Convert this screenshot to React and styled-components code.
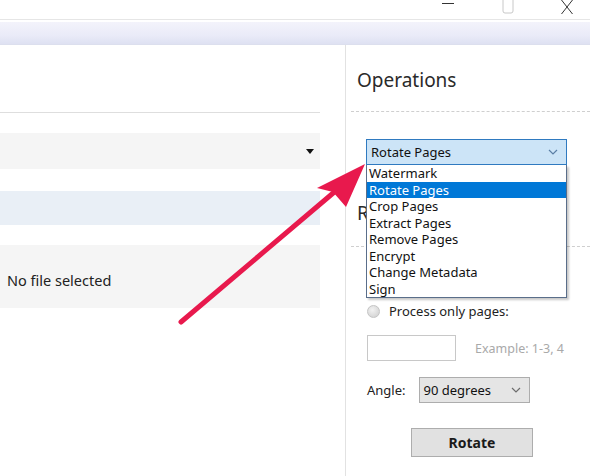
import React from 'react';
import styled, { createGlobalStyle } from 'styled-components';

const GlobalStyle = createGlobalStyle`
  html, body {
    margin: 0;
    padding: 0;
    background: #fff;
  }
  body {
    font-family: 'Noto Sans', 'Open Sans', sans-serif;
    color: #222;
  }
`;

const Window = styled.div`
  position: relative;
  width: 590px;
  height: 476px;
  overflow: hidden;
  background: #fff;
  display: flex;
  flex-direction: column;
`;

const TitleBar = styled.div`
  height: 20px;
  border-bottom: 1px solid #e6e6e6;
  display: flex;
  justify-content: flex-end;
  align-items: flex-start;
  padding-right: 17px;
  gap: 47px;
  box-sizing: border-box;
`;

const WinButton = styled.div`
  width: ${p => p.w || 12}px;
  height: 16px;
  display: flex;
  justify-content: center;
  align-items: flex-start;
  svg { display: block; }
`;

const Band = styled.div`
  height: 22px;
  margin-top: 2px;
  background: linear-gradient(180deg, #f3f3fb 0%, #eaebf8 60%, #dee1f2 100%);
  border-bottom: 1px solid #dcdfee;
`;

const Body = styled.div`
  flex: 1;
  display: flex;
`;

const LeftPanel = styled.div`
  width: 346px;
  border-right: 1px solid #e2e2e2;
  padding-top: 67px;
  box-sizing: border-box;
`;

const LeftRule = styled.div`
  width: 320px;
  border-top: 1px solid #dedede;
`;

const LeftBox = styled.div`
  width: 320px;
  height: ${p => p.h}px;
  margin-top: ${p => p.mt}px;
  background: ${p => p.bg};
  display: flex;
  align-items: center;
  justify-content: space-between;
  padding: ${p => p.pt || 0}px 6px 0 7px;
  box-sizing: border-box;
  font-size: 14.5px;
  color: #222;
`;

const Caret = styled.span`
  width: 0;
  height: 0;
  margin-left: auto;
  border-left: 4px solid transparent;
  border-right: 4px solid transparent;
  border-top: 5px solid #111;
`;

const RightPanel = styled.div`
  position: relative;
  flex: 1;
  padding: 24px 0 0 5px;
  box-sizing: border-box;
`;

const Heading = styled.div`
  font-size: 19px;
  line-height: 22px;
  height: 22px;
  color: #2a2a2a;
  margin-left: 6px;
  margin-top: ${p => p.mt || 0}px;
  font-weight: 400;
`;

const DashRule = styled.div`
  margin-top: ${p => p.mt}px;
  border-top: 1px dashed #cfcfcf;
`;

const Indent = styled.div`
  margin-left: ${p => p.ml || 15}px;
  margin-top: ${p => p.mt || 0}px;
`;

const ComboBox = styled.div`
  width: ${p => p.w}px;
  height: ${p => p.h}px;
  box-sizing: border-box;
  border: 1px solid ${p => (p.active ? '#2f7ac0' : '#adadad')};
  background: ${p => (p.active ? '#cce4f7' : '#e5e5e5')};
  display: flex;
  align-items: center;
  justify-content: space-between;
  padding: 0 8px 0 4px;
  font-size: 13px;
  color: #111;
`;

const List = styled.div`
  position: absolute;
  left: 20px;
  top: 120px;
  width: 201px;
  box-sizing: border-box;
  border: 1px solid #5a6e8a;
  border-top: none;
  background: #fff;
  box-shadow: 2px 2px 2px rgba(0, 0, 0, 0.22);
  z-index: 2;
`;

const ListItem = styled.div`
  height: 16.5px;
  line-height: 16.5px;
  padding-left: 2px;
  font-size: 13px;
  color: ${p => (p.selected ? '#fff' : '#111')};
  background: ${p => (p.selected ? '#0078d7' : 'transparent')};
`;

const Row = styled.div`
  display: flex;
  align-items: center;
  gap: ${p => p.gap || 8}px;
  margin-left: ${p => p.ml || 16}px;
  margin-top: ${p => p.mt || 0}px;
  font-size: 13px;
  color: #222;
`;

const Radio = styled.span`
  width: 13px;
  height: 13px;
  border-radius: 50%;
  box-sizing: border-box;
  border: 1px solid #c4c4c4;
  background: radial-gradient(circle at 40% 35%, #f2f2f2 0%, #d8d8d8 70%, #c8c8c8 100%);
`;

const TextInput = styled.div`
  width: 89px;
  height: 26px;
  box-sizing: border-box;
  border: 1px solid #c8c8c8;
  background: #fff;
`;

const Hint = styled.span`
  color: #a9a9a9;
  font-size: 12.5px;
  margin-left: 11px;
`;

const Button = styled.div`
  width: 122px;
  height: 29px;
  margin-left: 60px;
  margin-top: 25px;
  box-sizing: border-box;
  border: 1px solid #adadad;
  background: #e1e1e1;
  display: flex;
  align-items: center;
  justify-content: center;
  font-size: 14px;
  font-weight: 700;
  color: #1a1a1a;
`;

const ArrowLayer = styled.svg`
  position: absolute;
  left: 0;
  top: 0;
  pointer-events: none;
  z-index: 5;
`;

const Chevron = ({ color = '#6d6d6d' }) => (
  <svg width="10" height="6" viewBox="0 0 10 6">
    <path d="M1 1 L5 5 L9 1" fill="none" stroke={color} strokeWidth="1.2" />
  </svg>
);

const items = [
  'Watermark',
  'Rotate Pages',
  'Crop Pages',
  'Extract Pages',
  'Remove Pages',
  'Encrypt',
  'Change Metadata',
  'Sign',
];

export default function App() {
  return (
    <>
      <GlobalStyle />
      <Window>
        <TitleBar>
          <WinButton w={14}>
            <svg width="14" height="6" viewBox="0 0 14 6">
              <path d="M1 3.5 H13" stroke="#333" strokeWidth="1" />
            </svg>
          </WinButton>
          <WinButton>
            <svg width="12" height="14" viewBox="0 0 12 14">
              <path d="M1 -2 V11 Q1 13 3 13 H9 Q11 13 11 11 V-2" fill="none" stroke="#c8c8c8" strokeWidth="1" />
            </svg>
          </WinButton>
          <WinButton>
            <svg width="12" height="15" viewBox="0 0 12 15">
              <path d="M0.5 0 L11.5 14 M11.5 0 L0.5 14" stroke="#333" strokeWidth="1" />
            </svg>
          </WinButton>
        </TitleBar>
        <Band />
        <Body>
          <LeftPanel>
            <LeftRule />
            <LeftBox h={36} mt={20} bg="#f5f5f5">
              <Caret />
            </LeftBox>
            <LeftBox h={34} mt={22} bg="#e9eff6" />
            <LeftBox h={63} mt={20} bg="#f5f5f5" pt={6}>
              No file selected
            </LeftBox>
          </LeftPanel>
          <RightPanel>
            <Heading>Operations</Heading>
            <DashRule mt={20} />
            <Indent mt={27}>
              <ComboBox w={201} h={26} active>
                <span>Rotate Pages</span>
                <Chevron color="#5b7fa6" />
              </ComboBox>
            </Indent>
            <List>
              {items.map(it => (
                <ListItem key={it} selected={it === 'Rotate Pages'}>
                  {it}
                </ListItem>
              ))}
            </List>
            <Heading mt={37}>Rotate</Heading>
            <DashRule mt={22} />
            <Row mt={55} gap={9}>
              <Radio />
              <span>Process only pages:</span>
            </Row>
            <Row mt={15} gap={0}>
              <TextInput />
              <Hint>Example: 1-3, 4</Hint>
            </Row>
            <Row mt={16} gap={13}>
              <span>Angle:</span>
              <ComboBox w={111} h={26}>
                <span>90 degrees</span>
                <Chevron />
              </ComboBox>
            </Row>
            <Button>Rotate</Button>
          </RightPanel>
        </Body>
        <ArrowLayer width="590" height="476" viewBox="0 0 590 476">
          <path d="M181 322 L345 183" stroke="#e8194d" strokeWidth="5" strokeLinecap="round" />
          <path d="M365 164 L317 188 L333 192 L346 207 Z" fill="#e8194d" />
        </ArrowLayer>
      </Window>
    </>
  );
}
